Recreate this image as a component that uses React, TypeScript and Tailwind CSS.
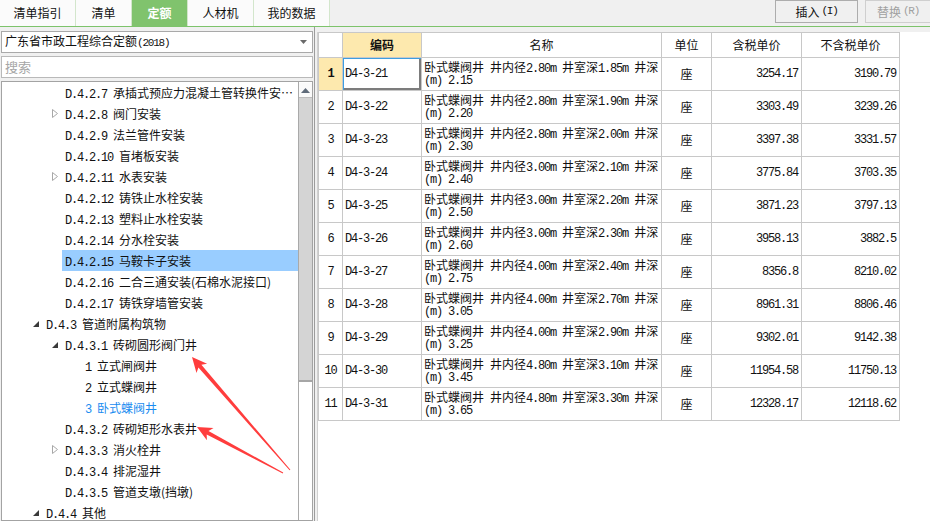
import React from "react";

const cjk = "font-['Noto_Sans_CJK_SC',sans-serif]";
const mono = "font-['Liberation_Mono','Noto_Sans_CJK_SC',monospace] tracking-[-1.2px]";

const tabs = [
  { label: "清单指引", w: "w-[76px]" },
  { label: "清单", w: "w-[56px]" },
  { label: "定额", w: "w-[56px]", active: true },
  { label: "人材机", w: "w-[66px]" },
  { label: "我的数据", w: "w-[76px]" },
];

type TreeNode = {
  level: 1 | 2 | 3;
  code: string;
  name: string;
  toggle?: "open" | "closed";
  selected?: boolean;
  current?: boolean;
};

const tree: TreeNode[] = [
  { level: 2, code: "D.4.2.7", name: "承插式预应力混凝土管转换件安…" },
  { level: 2, code: "D.4.2.8", name: "阀门安装", toggle: "closed" },
  { level: 2, code: "D.4.2.9", name: "法兰管件安装" },
  { level: 2, code: "D.4.2.10", name: "盲堵板安装" },
  { level: 2, code: "D.4.2.11", name: "水表安装", toggle: "closed" },
  { level: 2, code: "D.4.2.12", name: "铸铁止水栓安装" },
  { level: 2, code: "D.4.2.13", name: "塑料止水栓安装" },
  { level: 2, code: "D.4.2.14", name: "分水栓安装" },
  { level: 2, code: "D.4.2.15", name: "马鞍卡子安装", selected: true },
  { level: 2, code: "D.4.2.16", name: "二合三通安装(石棉水泥接口)" },
  { level: 2, code: "D.4.2.17", name: "铸铁穿墙管安装" },
  { level: 1, code: "D.4.3", name: "管道附属构筑物", toggle: "open" },
  { level: 2, code: "D.4.3.1", name: "砖砌圆形阀门井", toggle: "open" },
  { level: 3, code: "1", name: "立式闸阀井" },
  { level: 3, code: "2", name: "立式蝶阀井" },
  { level: 3, code: "3", name: "卧式蝶阀井", current: true },
  { level: 2, code: "D.4.3.2", name: "砖砌矩形水表井" },
  { level: 2, code: "D.4.3.3", name: "消火栓井", toggle: "closed" },
  { level: 2, code: "D.4.3.4", name: "排泥湿井" },
  { level: 2, code: "D.4.3.5", name: "管道支墩(挡墩)" },
  { level: 1, code: "D.4.4", name: "其他", toggle: "open" },
];

const rows = [
  ["D4-3-21", "2.80", "1.85", "2.15", "3254.17", "3190.79"],
  ["D4-3-22", "2.80", "1.90", "2.20", "3303.49", "3239.26"],
  ["D4-3-23", "2.80", "2.00", "2.30", "3397.38", "3331.57"],
  ["D4-3-24", "3.00", "2.10", "2.40", "3775.84", "3703.35"],
  ["D4-3-25", "3.00", "2.20", "2.50", "3871.23", "3797.13"],
  ["D4-3-26", "3.00", "2.30", "2.60", "3958.13", "3882.5"],
  ["D4-3-27", "4.00", "2.40", "2.75", "8356.8", "8210.02"],
  ["D4-3-28", "4.00", "2.70", "3.05", "8961.31", "8806.46"],
  ["D4-3-29", "4.00", "2.90", "3.25", "9302.01", "9142.38"],
  ["D4-3-30", "4.80", "3.10", "3.45", "11954.58", "11750.13"],
  ["D4-3-31", "4.80", "3.30", "3.65", "12328.17", "12118.62"],
];

function Toggle({ kind }: { kind?: "open" | "closed" }) {
  if (kind === "closed")
    return (
      <svg width="6" height="9" viewBox="0 0 6 9">
        <path d="M0.5 0.5 L5.5 4.5 L0.5 8.5 Z" fill="none" stroke="#a8a8a8" />
      </svg>
    );
  if (kind === "open")
    return (
      <svg width="6" height="6" viewBox="0 0 6 6">
        <path d="M6 0 L6 6 L0 6 Z" fill="#3a3a3a" />
      </svg>
    );
  return null;
}

function TreeRow({ node }: { node: TreeNode }) {
  const pad = node.level === 1 ? "pl-[29px]" : node.level === 2 ? "pl-[48px]" : "pl-[68px]";
  return (
    <div className={`h-[21px] flex items-center ${pad}`}>
      <div className="w-[12px] h-[21px] flex items-center pl-[2px]">
        <Toggle kind={node.toggle} />
      </div>
      <div
        className={`flex-1 h-[21px] leading-[21px] pl-[3px] whitespace-nowrap overflow-hidden ${
          node.selected ? "bg-[#99cdff]" : ""
        } ${node.current ? "text-[#1a8cf0]" : "text-[#111]"}`}
      >
        <span className={mono}>{node.code} </span>
        {node.name}
      </div>
    </div>
  );
}

function Arrows() {
  return (
    <svg className="absolute left-0 top-0 pointer-events-none" width="930" height="521">
      <polygon
        points="290.4,469.7 201.4,364.8 207.1,363.7 192,357 196.5,372.9 198.4,367.4 289.6,470.3"
        fill="#ff3d3d"
      />
      <polygon
        points="283.2,472.6 208.5,430.9 213.5,427.9 197,427 206.9,440.3 206.7,434.5 282.8,473.4"
        fill="#ff3d3d"
      />
    </svg>
  );
}

export default function App() {
  return (
    <div className={`relative w-[930px] h-[521px] overflow-hidden bg-[#f0f0f0] flex flex-col text-[12px] text-[#111] ${cjk}`}>
      {/* top tabs */}
      <div className="h-[27px] flex border-b border-[#7dc36b] shrink-0">
        {tabs.map((t) => (
          <div
            key={t.label}
            className={`${t.w} h-full flex items-center justify-center border-r border-[#d3e6cc] text-[12px] ${
              t.active ? "bg-[#80c36d] text-white font-bold" : "bg-[#fbfbfb] text-[#111]"
            }`}
          >
            {t.label}
          </div>
        ))}
        <div className="flex-1" />
        <div className="w-[83px] h-[23px] flex items-center justify-center border border-[#adadad] bg-[#f0f0f0] text-[12px]">
          插入<span className={`${mono} text-[11px] ml-[2px]`}>(I)</span>
        </div>
        <div className="w-[7px]" />
        <div className="w-[65px] h-[23px] flex items-center justify-center border border-r-0 border-[#cfcfcf] bg-[#f0f0f0] text-[#a0a0a0]">
          替换<span className={`${mono} text-[11px] ml-[2px]`}>(R)</span>
        </div>
      </div>

      <div className="flex flex-1 min-h-0">
        {/* left panel */}
        <div className="w-[314px] flex flex-col pt-[4px] pl-[1px] pr-[1px]">
          <div className="h-[22px] flex items-center bg-white border border-[#a9a9a9] pl-[3px] pr-[5px]">
            <span className="flex-1 whitespace-nowrap">
              广东省市政工程综合定额<span className={`${mono} text-[11px]`}>(2018)</span>
            </span>
            <svg width="7" height="4" viewBox="0 0 7 4">
              <path d="M0 0 L7 0 L3.5 4 Z" fill="#6a6a6a" />
            </svg>
          </div>
          <div className="h-[22px] mt-[3px] flex items-center bg-white border border-[#b9b9b9] pl-[3px] text-[#a6a6a6] text-[13px]">
            搜索
          </div>
          <div className="flex-1 mt-[3px] flex bg-white border border-[#a3a3a3] min-h-0">
            <div className="flex-1 overflow-hidden">
              {tree.map((n) => (
                <TreeRow key={n.code + n.name} node={n} />
              ))}
            </div>
            <div className="w-[14px] flex flex-col border-l border-[#a9a9a9] bg-white">
              <div className="h-[15px] flex items-center justify-center border-b border-[#bcbcbc] bg-[#fafafa] mt-[1px]">
                <svg width="9" height="5" viewBox="0 0 9 5">
                  <path d="M0 5 L4.5 0 L9 5 Z" fill="#5f6b7a" />
                </svg>
              </div>
              <div className="h-[284px] bg-[#d4d4d4] border-b-2 border-[#a6a6a6]" />
              <div className="flex-1 bg-white" />
            </div>
          </div>
        </div>

        {/* splitter */}
        <div className="w-[3px] flex">
          <div className="w-[1px] bg-[#9c9c9c]" />
        </div>

        {/* right table */}
        <div className="flex-1 mt-[5px] bg-white border-l border-[#d0d0d0]">
          <table className="border-collapse table-fixed w-[581px]">
            <colgroup>
              <col className="w-[24px]" />
              <col className="w-[79px]" />
              <col className="w-[240px]" />
              <col className="w-[50px]" />
              <col className="w-[90px]" />
              <col className="w-[98px]" />
            </colgroup>
            <thead>
              <tr className="h-[25px]">
                <th className="border border-[#c8c8c8] font-normal" />
                <th className="border border-[#c8c8c8] bg-[#fde9ae] font-bold">编码</th>
                <th className="border border-[#c8c8c8] font-normal">名称</th>
                <th className="border border-[#c8c8c8] font-normal">单位</th>
                <th className="border border-[#c8c8c8] font-normal">含税单价</th>
                <th className="border border-[#c8c8c8] font-normal">不含税单价</th>
              </tr>
            </thead>
            <tbody>
              {rows.map((r, i) => (
                <tr key={r[0]} className="h-[33px]">
                  <td
                    className={`border border-[#c8c8c8] text-center ${mono} ${
                      i === 0 ? "bg-[#fde9ae] font-bold" : ""
                    }`}
                  >
                    {i + 1}
                  </td>
                  <td
                    className={`border border-[#c8c8c8] pl-[2px] ${mono} ${
                      i === 0 ? "shadow-[inset_1px_1px_0_#3d9ee0,inset_-2px_-2px_0_#7c7c7c]" : ""
                    }`}
                  >
                    {r[0]}
                  </td>
                  <td className="border border-[#c8c8c8] pl-[2px] whitespace-nowrap overflow-hidden">
                    <div className="h-[15px] leading-[15px]">
                      卧式蝶阀井<span className={mono}> </span>井内径<span className={mono}>{r[1]}m </span>井室深
                      <span className={mono}>{r[2]}m </span>井深
                    </div>
                    <div className={`h-[15px] leading-[15px] ${mono}`}>(m) {r[3]}</div>
                  </td>
                  <td className="border border-[#c8c8c8] text-center">座</td>
                  <td className={`border border-[#c8c8c8] text-right pr-[3px] ${mono}`}>{r[4]}</td>
                  <td className={`border border-[#c8c8c8] text-right pr-[3px] ${mono}`}>{r[5]}</td>
                </tr>
              ))}
            </tbody>
          </table>
        </div>
      </div>

      <Arrows />
    </div>
  );
}
